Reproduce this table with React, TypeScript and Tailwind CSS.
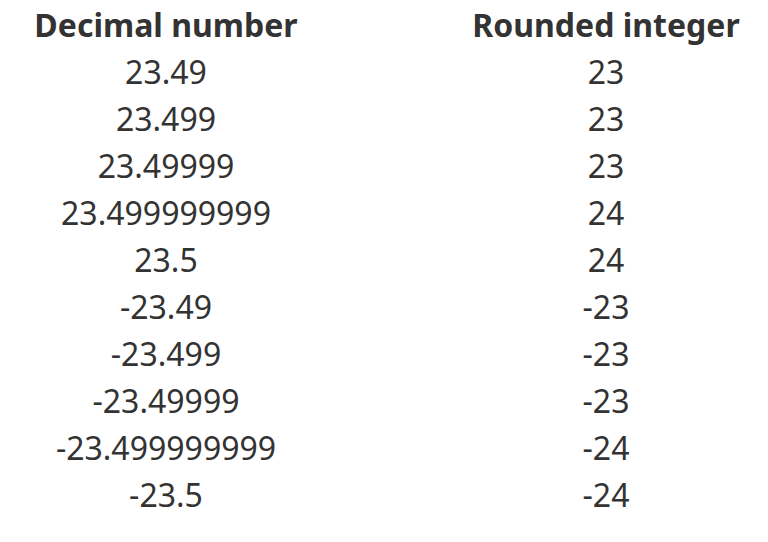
import React from 'react';

const ROWS: [string, string][] = [
  ['23.49', '23'],
  ['23.499', '23'],
  ['23.49999', '23'],
  ['23.499999999', '24'],
  ['23.5', '24'],
  ['-23.49', '-23'],
  ['-23.499', '-23'],
  ['-23.49999', '-23'],
  ['-23.499999999', '-24'],
  ['-23.5', '-24'],
];

const App: React.FC = () => {
  return (
    <div
      className="w-[768px] h-[542px] bg-white text-[#333333] overflow-hidden"
      style={{ fontFamily: '"Noto Sans", "Open Sans", sans-serif' }}
    >
      <div className="grid grid-cols-[300px_300px] gap-x-[140px] pl-4 pt-[1px] text-[32px] leading-[47px] text-center">
        <div className="font-bold">Decimal number</div>
        <div className="font-bold">Rounded integer</div>
        {ROWS.map(([dec, int]) => (
          <React.Fragment key={dec}>
            <div>{dec}</div>
            <div>{int}</div>
          </React.Fragment>
        ))}
      </div>
    </div>
  );
};

export default App;
